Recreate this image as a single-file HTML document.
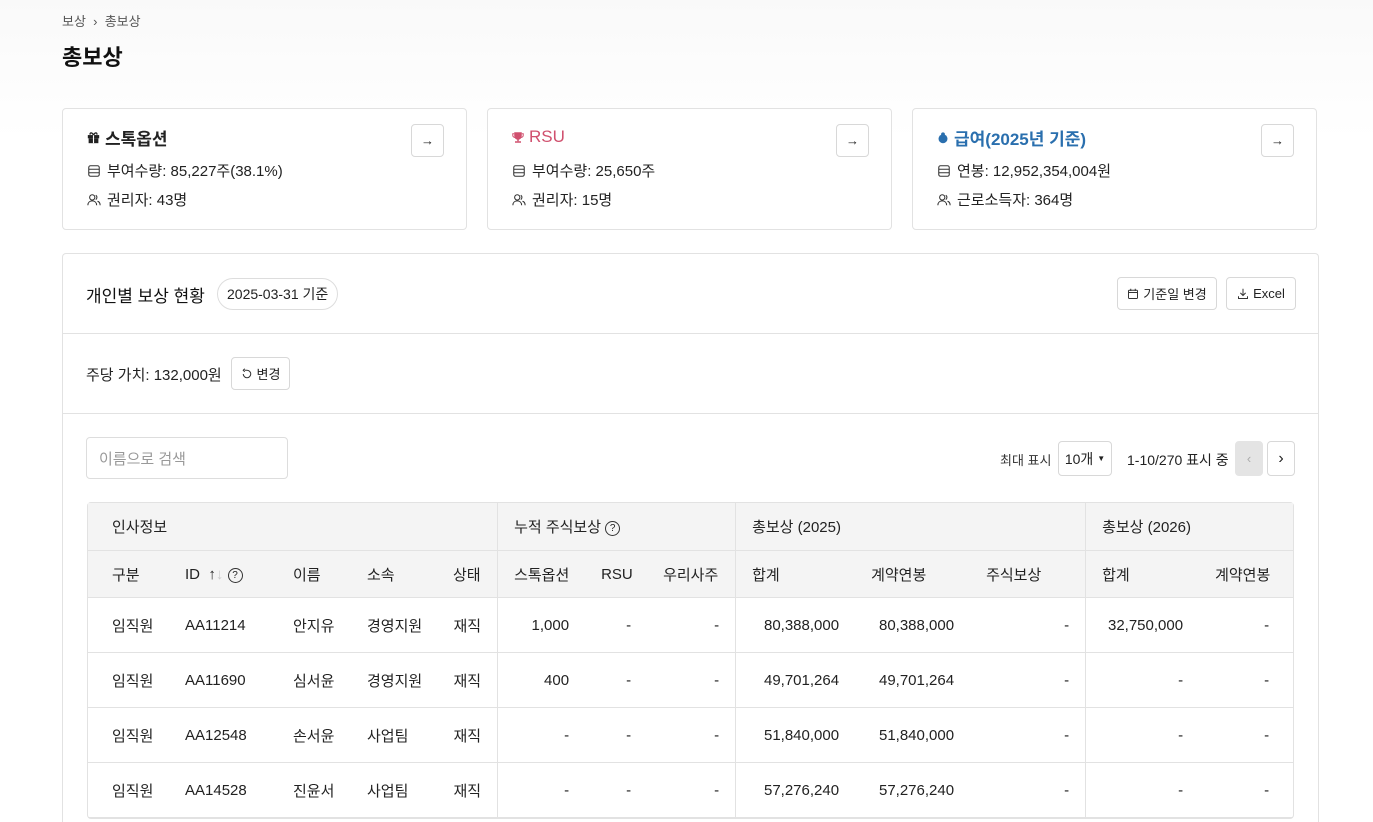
<!DOCTYPE html>
<html><head><meta charset="utf-8"><style>
*{box-sizing:border-box;margin:0;padding:0}
html{width:1373px;height:822px;overflow:hidden}
body{width:1373px;height:822px;overflow:hidden;font-family:"Liberation Sans","Noto Sans CJK KR",sans-serif;color:#222;background:linear-gradient(#f9f9f9 0,#fdfdfd 90px,#fff 140px);position:relative}
.abs{position:absolute}
.bc{left:62px;top:11px;font-size:13px;color:#555}
.h1{left:62px;top:40px;font-size:22px;font-weight:700;color:#111}
.card{position:absolute;top:108px;width:405px;height:122px;border:1px solid #e2e2e2;border-radius:4px;background:#fff}
.card .t{position:absolute;left:24px;top:16px;font-size:17px;font-weight:700;display:flex;align-items:center;gap:5px}
.card .l{position:absolute;left:24px;font-size:15px;display:flex;align-items:center;gap:6px;color:#222}
.btn{position:absolute;border:1px solid #d8d8d8;border-radius:4px;background:#fff;display:flex;align-items:center;justify-content:center;font-size:13px;color:#222;gap:4px}
.arrow{right:22px;top:15px;width:33px;height:33px}
.panel{position:absolute;left:62px;top:253px;width:1257px;height:569px;border:1px solid #e2e2e2;border-bottom:none;border-radius:4px 4px 0 0;background:#fff;overflow:hidden}
table{position:absolute;left:24px;top:248px;border-collapse:separate;border-spacing:0;font-size:15px;border:1px solid #e2e2e2;border-radius:4px;table-layout:fixed;width:1207px}
th{background:#f4f4f4;font-weight:400;text-align:left;padding-left:16px;color:#222;border-bottom:1px solid #e2e2e2}
tr.r1 th{height:48px}
tr.r2 th{height:47px}
td{height:55px;border-bottom:1px solid #e2e2e2;text-align:right;padding-right:16px}
td.l{text-align:left;padding-left:16px;padding-right:0}
.bl{border-left:1px solid #e2e2e2}
.q{display:inline-block;width:15px;height:15px;border:1.3px solid #333;border-radius:50%;font-size:10px;text-align:center;line-height:13px;vertical-align:1px}
</style></head><body>
<div class="abs bc">보상 &nbsp;›&nbsp; 총보상</div>
<div class="abs h1">총보상</div>

<div class="card" style="left:62px">
 <div class="t"><svg width="13" height="13" viewBox="0 0 16 16"><rect x="1" y="5" width="14" height="4" fill="#222"/><rect x="2" y="9" width="12" height="6" fill="#222"/><rect x="7.3" y="5" width="1.4" height="10" fill="#fff"/><path d="M8 5C6 1 3 2 4 4.5M8 5c2-4 5-3 4-0.5" stroke="#222" stroke-width="1.6" fill="none"/></svg>스톡옵션</div>
 <div class="l" style="top:51px"><svg width="14" height="14" viewBox="0 0 16 16" fill="none" stroke="#333" stroke-width="1.2"><rect x="2" y="2" width="12" height="12" rx="2"/><path d="M2 6h12M2 10h12"/></svg>부여수량: 85,227주(38.1%)</div>
 <div class="l" style="top:80px"><svg width="14" height="14" viewBox="0 0 16 16" fill="none" stroke="#333" stroke-width="1.2"><circle cx="6" cy="5" r="3"/><path d="M1 14c0-3 2-5 5-5s5 2 5 5M10 2.5a3 3 0 010 5M12 9.5c2 .5 3 2 3 4.5"/></svg>권리자: 43명</div>
 <div class="btn arrow">→</div>
</div>
<div class="card" style="left:487px">
 <div class="t" style="color:#d0506e;top:18px"><svg width="12" height="13" viewBox="0 0 16 16"><path d="M3 1h10v5a5 5 0 01-10 0z" fill="#d0506e"/><path d="M3 3H1v2a3 3 0 003 3M13 3h2v2a3 3 0 01-3 3" stroke="#d0506e" stroke-width="1.3" fill="none"/><rect x="7" y="10" width="2" height="3" fill="#d0506e"/><rect x="4" y="13" width="8" height="2" fill="#d0506e"/></svg><span style="font-weight:400">RSU</span></div>
 <div class="l" style="top:51px"><svg width="14" height="14" viewBox="0 0 16 16" fill="none" stroke="#333" stroke-width="1.2"><rect x="2" y="2" width="12" height="12" rx="2"/><path d="M2 6h12M2 10h12"/></svg>부여수량: 25,650주</div>
 <div class="l" style="top:80px"><svg width="14" height="14" viewBox="0 0 16 16" fill="none" stroke="#333" stroke-width="1.2"><circle cx="6" cy="5" r="3"/><path d="M1 14c0-3 2-5 5-5s5 2 5 5M10 2.5a3 3 0 010 5M12 9.5c2 .5 3 2 3 4.5"/></svg>권리자: 15명</div>
 <div class="btn arrow">→</div>
</div>
<div class="card" style="left:912px">
 <div class="t" style="color:#2a6fae"><svg width="12" height="12" viewBox="0 0 16 16"><circle cx="8" cy="9" r="6" fill="#2a6fae"/><circle cx="8" cy="3" r="2.5" fill="#2a6fae"/></svg>급여(2025년 기준)</div>
 <div class="l" style="top:51px"><svg width="14" height="14" viewBox="0 0 16 16" fill="none" stroke="#333" stroke-width="1.2"><rect x="2" y="2" width="12" height="12" rx="2"/><path d="M2 6h12M2 10h12"/></svg>연봉: 12,952,354,004원</div>
 <div class="l" style="top:80px"><svg width="14" height="14" viewBox="0 0 16 16" fill="none" stroke="#333" stroke-width="1.2"><circle cx="6" cy="5" r="3"/><path d="M1 14c0-3 2-5 5-5s5 2 5 5M10 2.5a3 3 0 010 5M12 9.5c2 .5 3 2 3 4.5"/></svg>근로소득자: 364명</div>
 <div class="btn arrow">→</div>
</div>

<div class="panel">
 <div class="abs" style="left:23px;top:28px;font-size:17px;color:#111">개인별 보상 현황</div>
 <div class="abs" style="left:154px;top:24px;height:32px;padding:0 9px;border:1px solid #ddd;border-radius:16px;font-size:14px;line-height:30px">2025-03-31 기준</div>
 <div class="btn" style="left:1054px;top:23px;width:100px;height:33px"><svg width="12" height="12" viewBox="0 0 16 16" fill="none" stroke="#333" stroke-width="1.3"><rect x="2" y="3" width="12" height="11" rx="1"/><path d="M2 6h12M5 1v3M11 1v3"/></svg>기준일 변경</div>
 <div class="btn" style="left:1163px;top:23px;width:70px;height:33px"><svg width="12" height="12" viewBox="0 0 16 16" fill="none" stroke="#333" stroke-width="1.3"><path d="M8 1v9M4.5 6.5L8 10l3.5-3.5M2 11v3h12v-3"/></svg>Excel</div>
 <div class="abs" style="left:0;top:79px;width:100%;border-top:1px solid #e2e2e2"></div>
 <div class="abs" style="left:23px;top:110px;font-size:15px">주당 가치: 132,000원</div>
 <div class="btn" style="left:168px;top:103px;width:59px;height:33px"><svg width="12" height="12" viewBox="0 0 16 16" fill="none" stroke="#333" stroke-width="1.4"><path d="M3 8a5 5 0 105-5H5M5 1L3 3l2 2"/></svg>변경</div>
 <div class="abs" style="left:0;top:159px;width:100%;border-top:1px solid #e2e2e2"></div>
 <div class="abs" style="left:23px;top:183px;width:202px;height:42px;border:1px solid #ddd;border-radius:4px;font-size:15px;color:#999;padding:10px 12px">이름으로 검색</div>
 <div class="abs" style="left:937px;top:196px;font-size:13px;color:#333">최대 표시</div>
 <div class="btn" style="left:995px;top:187px;width:54px;height:35px;font-size:14px">10개 <span style="font-size:8px">▼</span></div>
 <div class="abs" style="left:1064px;top:196px;font-size:14px;color:#222">1-10/270 표시 중</div>
 <div class="btn" style="left:1172px;top:187px;width:28px;height:35px;background:#e4e4e4;border-color:#e4e4e4;color:#aaa">‹</div>
 <div class="btn" style="left:1204px;top:187px;width:28px;height:35px;font-size:16px">›</div>

 <table>
  <colgroup><col style="width:81px"><col style="width:108px"><col style="width:74px"><col style="width:86px"><col style="width:60px"><col style="width:88px"><col style="width:62px"><col style="width:88px"><col style="width:120px"><col style="width:115px"><col style="width:115px"><col style="width:114px"><col style="width:94px"></colgroup>
  <tr class="r1"><th colspan="5" style="padding-left:24px">인사정보</th><th colspan="3" class="bl">누적 주식보상 <span class="q">?</span></th><th colspan="3" class="bl">총보상 (2025)</th><th colspan="2" class="bl">총보상 (2026)</th></tr>
  <tr class="r2"><th style="padding-left:24px">구분</th><th>ID &nbsp;<b>↑</b><span style="color:#ccc">↓</span> <span class="q">?</span></th><th>이름</th><th>소속</th><th>상태</th><th class="bl">스톡옵션</th><th>RSU</th><th>우리사주</th><th class="bl">합계</th><th>계약연봉</th><th>주식보상</th><th class="bl">합계</th><th>계약연봉</th></tr>
  <tr><td class="l" style="padding-left:24px">임직원</td><td class="l">AA11214</td><td class="l">안지유</td><td class="l">경영지원</td><td>재직</td><td class="bl">1,000</td><td>-</td><td>-</td><td class="bl">80,388,000</td><td>80,388,000</td><td>-</td><td class="bl">32,750,000</td><td style="padding-right:24px">-</td></tr>
  <tr><td class="l" style="padding-left:24px">임직원</td><td class="l">AA11690</td><td class="l">심서윤</td><td class="l">경영지원</td><td>재직</td><td class="bl">400</td><td>-</td><td>-</td><td class="bl">49,701,264</td><td>49,701,264</td><td>-</td><td class="bl">-</td><td style="padding-right:24px">-</td></tr>
  <tr><td class="l" style="padding-left:24px">임직원</td><td class="l">AA12548</td><td class="l">손서윤</td><td class="l">사업팀</td><td>재직</td><td class="bl">-</td><td>-</td><td>-</td><td class="bl">51,840,000</td><td>51,840,000</td><td>-</td><td class="bl">-</td><td style="padding-right:24px">-</td></tr>
  <tr><td class="l" style="padding-left:24px">임직원</td><td class="l">AA14528</td><td class="l">진윤서</td><td class="l">사업팀</td><td>재직</td><td class="bl">-</td><td>-</td><td>-</td><td class="bl">57,276,240</td><td>57,276,240</td><td>-</td><td class="bl">-</td><td style="padding-right:24px">-</td></tr>
 </table>
</div>
</body></html>
